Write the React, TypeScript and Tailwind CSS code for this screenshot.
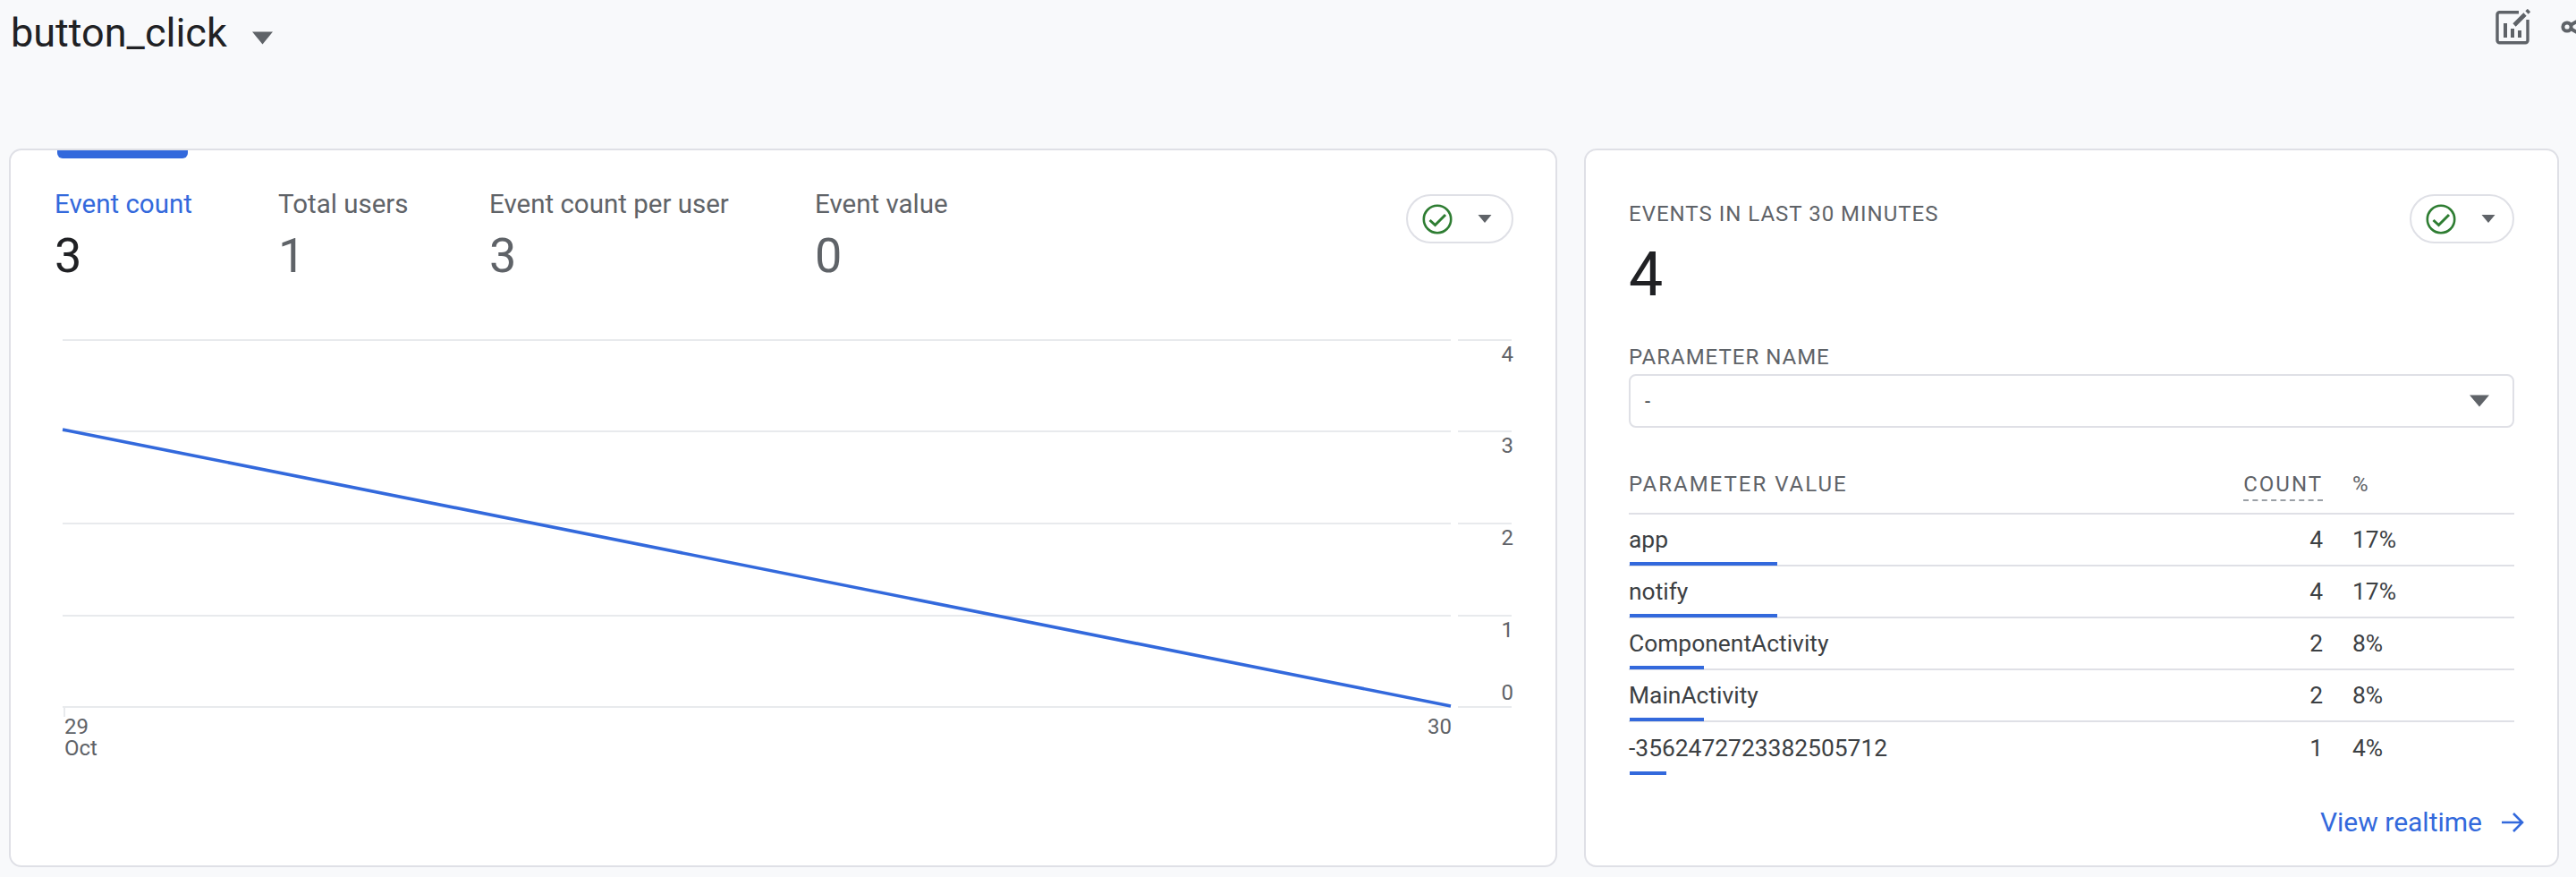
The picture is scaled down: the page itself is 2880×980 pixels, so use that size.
const BLUE = "#3369dc";

function Caret({ className }: { className: string }) {
  return (
    <svg viewBox="0 0 10 6" className={className} fill="#5f6368">
      <path d="M0 0h10L5 6z" />
    </svg>
  );
}

function StatusPill({ className }: { className: string }) {
  return (
    <div className={`flex items-center h-[55px] rounded-full border-2 border-[#dfe0e6] bg-white ${className}`}>
      <svg viewBox="0 0 34 34" className="w-[34px] h-[34px] ml-[16px]" fill="none" stroke="#2e7d32">
        <circle cx="17" cy="17" r="15.2" strokeWidth="2.6" />
        <path d="M8.5 18l6 5.5L26 12" strokeWidth="3" />
      </svg>
      <Caret className="w-[16px] h-[9px] ml-[28px]" />
    </div>
  );
}

function Tab({ label, value, active, width }: { label: string; value: string; active?: boolean; width: string }) {
  return (
    <div className={`flex flex-col ${width}`}>
      <div className={`text-[29.5px] leading-[30px] ${active ? "text-[#3369dc]" : "text-[#5f6368]"}`}>{label}</div>
      <div className={`text-[54px] leading-[60px] mt-[13px] ${active ? "text-[#202124]" : "text-[#5f6368]"}`}>{value}</div>
    </div>
  );
}

function Chart() {
  const lines = [379, 481, 584, 687, 789];
  const labels = ["4", "3", "2", "1", "0"];
  return (
    <svg viewBox="0 0 1700 520" className="block w-[1700px] h-[520px]">
      {lines.map((y, i) => {
        const ly = y - 369;
        return (
          <g key={y}>
            <rect x="58" y={ly} width="1552" height="2" fill="#e8eaed" />
            <rect x="1618" y={ly} width="60" height="2" fill="#e8eaed" />
            <text x="1680" y={i === 4 ? ly - 7 : ly + 25} textAnchor="end" fontSize="24" fill="#5f6368" fontFamily="Roboto, sans-serif">
              {labels[i]}
            </text>
          </g>
        );
      })}
      <rect x="59" y="420" width="2" height="12" fill="#e8eaed" />
      <path d="M58 111L1610 420" stroke={BLUE} strokeWidth="3.6" fill="none" />
      <text x="60" y="451" fontSize="24" fill="#5f6368" fontFamily="Roboto, sans-serif">29</text>
      <text x="60" y="475" fontSize="24" fill="#5f6368" fontFamily="Roboto, sans-serif">Oct</text>
      <text x="1611" y="451" textAnchor="end" fontSize="24" fill="#5f6368" fontFamily="Roboto, sans-serif">30</text>
    </svg>
  );
}

const rows = [
  { name: "app", count: 4, pct: "17%", bar: "w-[165px]" },
  { name: "notify", count: 4, pct: "17%", bar: "w-[165px]" },
  { name: "ComponentActivity", count: 2, pct: "8%", bar: "w-[83px]" },
  { name: "MainActivity", count: 2, pct: "8%", bar: "w-[83px]" },
  { name: "-3562472723382505712", count: 1, pct: "4%", bar: "w-[41px]" },
];

export default function App() {
  return (
    <div className="w-[2880px] h-[980px] overflow-hidden bg-[#f8f9fb] font-['Roboto',sans-serif]">
      {/* Header */}
      <div className="h-[166px] flex items-start">
        <h1 className="ml-[12px] mt-[12px] text-[45px] leading-[50px] text-[#202124] font-normal">button_click</h1>
        <Caret className="w-[23px] h-[15px] ml-[28px] mt-[35px]" />
        <div className="ml-auto mt-[10px] flex gap-[31px] shrink-0 -mr-[21px]">
          <svg viewBox="0 0 40 40" className="w-[40px] h-[40px]" fill="none" stroke="#5f6368" strokeWidth="3.4">
            <path d="M26 3.7H4.5a2.5 2.5 0 0 0-2.5 2.5v29a2.5 2.5 0 0 0 2.5 2.5h29a2.5 2.5 0 0 0 2.5-2.5V12" />
            <path d="M11 16v16M19 22v10M27 24v8" strokeWidth="4" />
            <path d="M21 18L33 6M35 4l2.5-2.5" strokeWidth="4.6" />
          </svg>
          <svg viewBox="0 0 40 40" className="w-[40px] h-[40px]" fill="none" stroke="#5f6368" strokeWidth="4">
            <circle cx="9" cy="20" r="4.6" />
            <circle cx="31" cy="7" r="4.6" />
            <circle cx="31" cy="33" r="4.6" />
            <path d="M13 18l14-8M13 22l14 8" />
          </svg>
        </div>
      </div>

      <div className="flex gap-[30px] pl-[10px]">
        {/* Left card */}
        <div className="relative w-[1731px] h-[803px] bg-white border-2 border-[#dfe0e6] rounded-[14px] pt-[45px]">
          <div className="absolute left-[52px] top-0 w-[146px] h-[9px] bg-[#3369dc] rounded-b-[6px]" />
          <div className="flex pl-[49px] pr-[47px] items-start h-[152px]">
            <Tab label="Event count" value="3" active width="w-[250px]" />
            <Tab label="Total users" value="1" width="w-[236px]" />
            <Tab label="Event count per user" value="3" width="w-[364px]" />
            <Tab label="Event value" value="0" width="w-[300px]" />
            <StatusPill className="ml-auto mt-[4px] w-[120px]" />
          </div>
          <div className="mt-[4px]">
            <Chart />
          </div>
        </div>

        {/* Right card */}
        <div className="w-[1090px] h-[803px] bg-white border-2 border-[#dfe0e6] rounded-[14px] px-[48px] pt-[49px]">
          <div className="flex items-start justify-between">
            <div className="pt-[9px]">
              <div className="text-[24px] leading-[26px] tracking-[1px] text-[#5f6368]">EVENTS IN LAST 30 MINUTES</div>
              <div className="text-[68px] leading-[78px] text-[#202124] mt-[16px]">4</div>
            </div>
            <StatusPill className="w-[117px]" />
          </div>
          <div className="mt-[40px] text-[24px] leading-[26px] tracking-[1px] text-[#5f6368]">PARAMETER NAME</div>
          <div className="mt-[6px] h-[60px] rounded-[8px] border-2 border-[#dfe0e6] flex items-center justify-between pl-[16px] pr-[26px]">
            <span className="text-[22px] text-[#3c4043]">-</span>
            <Caret className="w-[22px] h-[14px]" />
          </div>
          <div className="mt-[41px] h-[56px] pt-[9px] flex border-b-2 border-[#dfe0e6] text-[24px] leading-[26px] tracking-[2px] text-[#5f6368]">
            <div className="flex-1">PARAMETER VALUE</div>
            <div className="h-[32px] border-b-2 border-dashed border-[#9aa0a6]">COUNT</div>
            <div className="w-[214px] pl-[33px]">%</div>
          </div>
          {rows.map((row, i) => (
            <div key={row.name} className={`relative h-[58px] pt-[2px] flex items-center text-[26.4px] text-[#3c4043] ${i < 4 ? "border-b-2 border-[#dfe0e6]" : ""}`}>
              <div className="flex-1">{row.name}</div>
              <div>{row.count}</div>
              <div className="w-[214px] pl-[33px]">{row.pct}</div>
              <div className={`absolute left-[1px] -bottom-[1px] h-[4px] bg-[#3369dc] ${row.bar}`} />
            </div>
          ))}
          <div className="mt-[34px] -mr-[11px] flex items-center justify-end text-[#3369dc] text-[30px] leading-[40px]">
            <span>View realtime</span>
            <svg viewBox="0 0 26 26" className="w-[26px] h-[26px] ml-[21px]" fill="none" stroke="#3369dc" strokeWidth="2.6">
              <path d="M1 13h23M14 3l10 10-10 10" />
            </svg>
          </div>
        </div>
      </div>
    </div>
  );
}
